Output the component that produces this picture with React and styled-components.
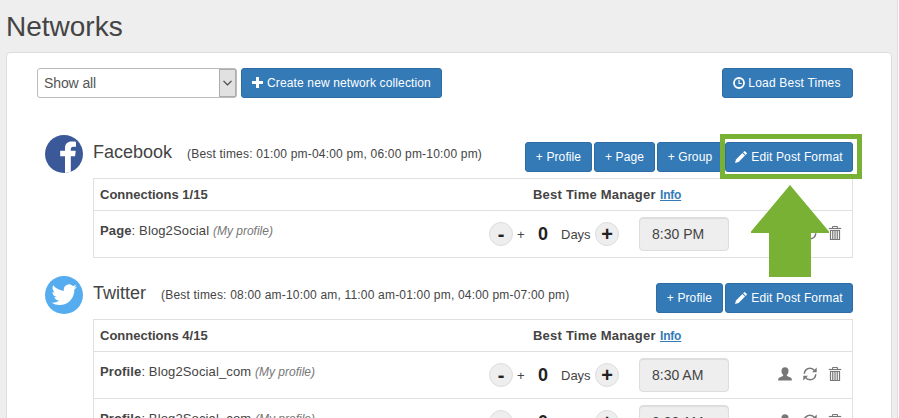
import React from "react";
import styled, { createGlobalStyle, css } from "styled-components";

const networks = [
  {
    name: "Facebook",
    times: "(Best times: 01:00 pm-04:00 pm, 06:00 pm-10:00 pm)",
    add: [{ label: "Profile", width: 67 }, { label: "Page", width: 61 }, { label: "Group", width: 66 }],
    count: "1/15",
    highlight: true,
    rows: [{ type: "Page", account: "Blog2Social", time: "8:30 PM" }],
  },
  {
    name: "Twitter",
    times: "(Best times: 08:00 am-10:00 am, 11:00 am-01:00 pm, 04:00 pm-07:00 pm)",
    add: [{ label: "Profile", width: 67 }],
    count: "4/15",
    rows: [
      { type: "Profile", account: "Blog2Social_com", time: "8:30 AM" },
      { type: "Profile", account: "Blog2Social_com", time: "8:30 AM" },
    ],
  },
];

const PlusIcon = () => (
  <svg width="11" height="11" viewBox="0 0 11 11">
    <path d="M4 0h3v4h4v3H7v4H4V7H0V4h4z" fill="#fff" />
  </svg>
);

const ClockIcon = () => (
  <svg width="12" height="12" viewBox="0 0 12 12" fill="none" stroke="#fff">
    <circle cx="6" cy="6" r="5" strokeWidth="1.8" />
    <path d="M6 2.8v3.7h2.6" strokeWidth="1.1" />
  </svg>
);

const PencilIcon = () => (
  <svg width="12" height="12" viewBox="0 0 12 12" fill="#fff">
    <path d="M0 12l1-3.6L7.4 2 10 4.6 3.6 11z" />
    <path d="M8.1 1.3L9 .4q.6-.6 1.2 0l1.4 1.4q.6.6 0 1.2l-.9.9z" />
  </svg>
);

const UserIcon = () => (
  <svg width="14" height="14" viewBox="0 0 14 14" fill="#777">
    <path d="M7 .3c2.300 0 3.500 1.400 3.500 3.600 0 1.600-.6 2.900-1.500 3.800-.3.300-.3 1.100.1 1.400 1 .7 3.500 1.200 4.300 2.200.4.500.5 1.500.5 2.300H.1c0-.8.1-1.800.5-2.300.8-1 3.300-1.500 4.300-2.200.4-.3.4-1.100.1-1.400C4.100 6.800 3.500 5.500 3.500 3.900 3.500 1.700 4.700.3 7 .3z" />
  </svg>
);

const RefreshIcon = () => (
  <svg width="14" height="14" viewBox="0 0 14 14" fill="none" stroke="#777" strokeWidth="1.600">
    <path d="M1.300 6.800C1.300 3.500 3.900 1.300 7 1.300c1.900 0 3.500.8 4.600 2.300" />
    <path d="M12.700 7.200c0 3.300-2.600 5.500-5.700 5.500-1.900 0-3.500-.8-4.600-2.300" />
    <path d="M13.700.6v4.700H9zM.3 13.400V8.700H5z" fill="#777" stroke="none" />
  </svg>
);

const TrashIcon = () => (
  <svg width="14" height="14" viewBox="0 0 14 14" fill="none" stroke="#777">
    <path d="M.8 2.500h12.400" strokeWidth="1.200" />
    <path d="M4.500 2V.5h5V2" />
    <path d="M2 4.500h10M2.500 4.500v9h9v-9M4.750 5v8M7 5v8M9.250 5v8" strokeWidth="1.200" />
  </svg>
);

const FacebookLogo = () => (
  <svg width="38" height="38" viewBox="0 0 38 38">
    <circle cx="19" cy="19" r="19" fill="#3b5998" />
    <path
      d="M20 38V21.200h-4.800v-5.500H20v-2.400c0-4.500 2.600-6.700 6.800-6.700 1.900 0 3.600.1 4.200.2v5h-2.700c-2 0-2.500 1-2.500 2.400v1.500h4.900l-.6 5.500h-4.300v15.500z"
      fill="#fff"
    />
  </svg>
);

const TwitterLogo = () => (
  <svg width="38" height="38" viewBox="0 0 38 38">
    <circle cx="19" cy="19" r="19" fill="#55acee" />
    <path
      transform="translate(6.500 6) scale(1.060)"
      d="M23.953 4.570a10 10 0 01-2.825.775 4.958 4.958 0 002.163-2.723c-.951.555-2.005.959-3.127 1.184a4.920 4.920 0 00-8.384 4.482C7.690 8.095 4.067 6.130 1.640 3.162a4.822 4.822 0 00-.666 2.475c0 1.710.870 3.213 2.188 4.096a4.904 4.904 0 01-2.228-.616v.060a4.923 4.923 0 003.946 4.827 4.996 4.996 0 01-2.212.085 4.936 4.936 0 004.604 3.417 9.867 9.867 0 01-6.102 2.105c-.390 0-.779-.023-1.170-.067a13.995 13.995 0 007.557 2.209c9.053 0 13.998-7.496 13.998-13.985 0-.210 0-.420-.015-.630A9.935 9.935 0 0024 4.590z"
      fill="#fff"
    />
  </svg>
);

const NetworkRow = ({ type, account, time }) => (
  <Row>
    <Account>
      <b>{type}</b>: {account} <i>(My profile)</i>
    </Account>
    <Stepper>
      <Round>-</Round>
      <Sign>+</Sign>
      <Amount>0</Amount>
      <Days>Days</Days>
      <Round $plus>+</Round>
    </Stepper>
    <TimeInput>{time}</TimeInput>
    <Actions>
      <UserIcon />
      <RefreshIcon />
      <TrashIcon />
    </Actions>
  </Row>
);

const Network = ({ data }) => (
  <Section>
    <Logo>{data.name === "Facebook" ? <FacebookLogo /> : <TwitterLogo />}</Logo>
    <Content>
      <SectionHead>
        <Name>{data.name}</Name>
        <Times>{data.times}</Times>
        <Buttons>
          {data.add.map((item) => (
            <Button key={item.label} $width={item.width}>
              + {item.label}
            </Button>
          ))}
          <EditWrap>
            <Button $width={128} $spacing={0.12}>
              <PencilIcon />
              Edit Post Format
            </Button>
            {data.highlight && <Highlight />}
            {data.highlight && (
              <Arrow width="78" height="93" viewBox="0 0 78 93">
                <path d="M39 0L78 46.500V48H60V92H18V48H0V46.500z" fill="#79b134" />
              </Arrow>
            )}
          </EditWrap>
        </Buttons>
      </SectionHead>
      <Table>
        <TableHead>
          <Connections>Connections {data.count}</Connections>
          <Manager>Best Time Manager</Manager>
          <Info>Info</Info>
        </TableHead>
        {data.rows.map((row, index) => (
          <NetworkRow key={index} {...row} />
        ))}
      </Table>
    </Content>
  </Section>
);

const App = () => {
  return (
    <Page>
      <GlobalStyle />
      <Heading>Networks</Heading>
      <Panel>
        <Toolbar>
          <Select>
            <span>Show all</span>
            <SelectArrow>
              <svg width="9" height="6" viewBox="0 0 9 6" fill="none" stroke="#444" strokeWidth="1.200">
                <path d="M.5.8l4 4 4-4" />
              </svg>
            </SelectArrow>
          </Select>
          <Button $width={201} $spacing={0.13}>
            <PlusIcon />
            Create new network collection
          </Button>
          <LoadButton $width={131} $spacing={0.2}>
            <ClockIcon />
            Load Best Times
          </LoadButton>
        </Toolbar>
        {networks.map((item) => (
          <Network key={item.name} data={item} />
        ))}
      </Panel>
    </Page>
  );
};

const GlobalStyle = createGlobalStyle`
  * {
    box-sizing: border-box;
  }
  body {
    margin: 0;
    background: #fff;
    font-family: "Liberation Sans", Arial, sans-serif;
    font-size: 13px;
    color: #444;
  }
`;

const Page = styled.div`
  width: 898px;
  height: 418px;
  overflow: hidden;
  background: #eee;
  border-right: 1px solid #ddd;
  padding-left: 6px;
`;

const Heading = styled.h1`
  margin: 0;
  height: 52px;
  padding-top: 10px;
  font-size: 28px;
  font-weight: 400;
  line-height: 33px;
`;

const Panel = styled.div`
  width: 886px;
  height: 420px;
  padding: 15px 38px 0 30px;
  background: #fff;
  border: 1px solid #ddd;
  border-radius: 4px;
`;

const Toolbar = styled.div`
  display: flex;
  height: 67px;
`;

const Select = styled.div`
  display: flex;
  justify-content: space-between;
  width: 200px;
  height: 30px;
  margin-right: 4px;
  padding-left: 6px;
  border: 1px solid #bbb;
  border-radius: 3px;
  font-size: 14px;
  letter-spacing: -0.1px;
  line-height: 29px;
  color: #555;
`;

const SelectArrow = styled.span`
  display: flex;
  align-items: center;
  justify-content: center;
  width: 17px;
  background: #e1e1e1;
  border: 1px solid #adadad;
`;

const Button = styled.button`
  display: flex;
  align-items: center;
  justify-content: center;
  gap: 4px;
  width: ${(props) => props.$width}px;
  height: 30px;
  padding: 0 0 1px;
  background: #337ab7;
  border: 1px solid #2e6da4;
  border-radius: 3px;
  color: #fff;
  font-family: inherit;
  font-size: 12px;
  letter-spacing: ${(props) => props.$spacing || 0.1}px;
  white-space: nowrap;
`;

const LoadButton = styled(Button)`
  gap: 3px;
  margin-left: auto;
  padding-right: 1px;
`;

const Section = styled.section`
  display: flex;
  padding-left: 8px;
  margin-bottom: 18px;
`;

const Logo = styled.div`
  width: 48px;
  height: 38px;
`;

const Content = styled.div`
  width: 760px;
`;

const SectionHead = styled.div`
  display: flex;
  height: 43px;
`;

const Name = styled.span`
  margin-right: 15px;
  font-size: 18px;
  line-height: 34px;
`;

const Times = styled.span`
  font-size: 12px;
  line-height: 38px;
  letter-spacing: 0.19px;
`;

const Buttons = styled.div`
  display: flex;
  gap: 2px;
  margin-left: auto;
  padding-top: 7px;
`;

const EditWrap = styled.div`
  position: relative;
  height: 30px;
`;

const Highlight = styled.div`
  position: absolute;
  top: -8px;
  left: -5px;
  width: 142px;
  height: 45px;
  border: 5px solid #79b134;
`;

const Arrow = styled.svg`
  position: absolute;
  top: 43px;
  left: 26px;
  z-index: 2;
`;

const Table = styled.div`
  border: 1px solid #e0e0e0;
`;

const TableHead = styled.div`
  display: flex;
  height: 31px;
  padding-left: 6px;
  font-weight: 700;
  line-height: 31px;
`;

const Connections = styled.span`
  width: 433px;
`;

const Manager = styled.span`
  width: 127px;
  letter-spacing: 0.22px;
`;

const Info = styled.a`
  color: #337ab7;
  font-size: 12px;
  text-decoration: underline;
  letter-spacing: -0.2px;
  line-height: 32px;
`;

const Row = styled.div`
  display: flex;
  height: 47px;
  padding: 6px 10px 0 6px;
  border-top: 1px solid #e0e0e0;
`;

const Account = styled.div`
  width: 389px;
  padding-top: 6px;
  line-height: 16px;
  letter-spacing: 0.13px;

  i {
    font-size: 12px;
    letter-spacing: 0;
    color: #777;
  }
`;

const Stepper = styled.div`
  display: flex;
  align-items: center;
  width: 150px;
  height: 34px;
`;

const Round = styled.span`
  display: flex;
  align-items: center;
  justify-content: center;
  width: 24px;
  height: 24px;
  background: #eee;
  border: 1px solid #ddd;
  border-radius: 50%;
  color: #222;
  font-size: 20px;
  font-weight: 700;
  line-height: 20px;
  ${(props) =>
    !props.$plus &&
    css`
      margin-right: 4px;
    `}
`;

const Sign = styled.span`
  width: 21px;
`;

const Amount = styled.b`
  width: 23px;
  font-size: 18px;
  color: #222;
`;

const Days = styled.span`
  width: 34px;
`;

const TimeInput = styled.div`
  width: 90px;
  height: 34px;
  padding-left: 12px;
  background: #eee;
  border: 1px solid #ddd;
  border-radius: 4px;
  box-shadow: inset 0 1px 1px rgba(0, 0, 0, 0.075);
  font-size: 14px;
  line-height: 32px;
`;

const Actions = styled.div`
  display: flex;
  gap: 11px;
  margin-left: auto;
  padding-top: 9px;
`;

export default App;
